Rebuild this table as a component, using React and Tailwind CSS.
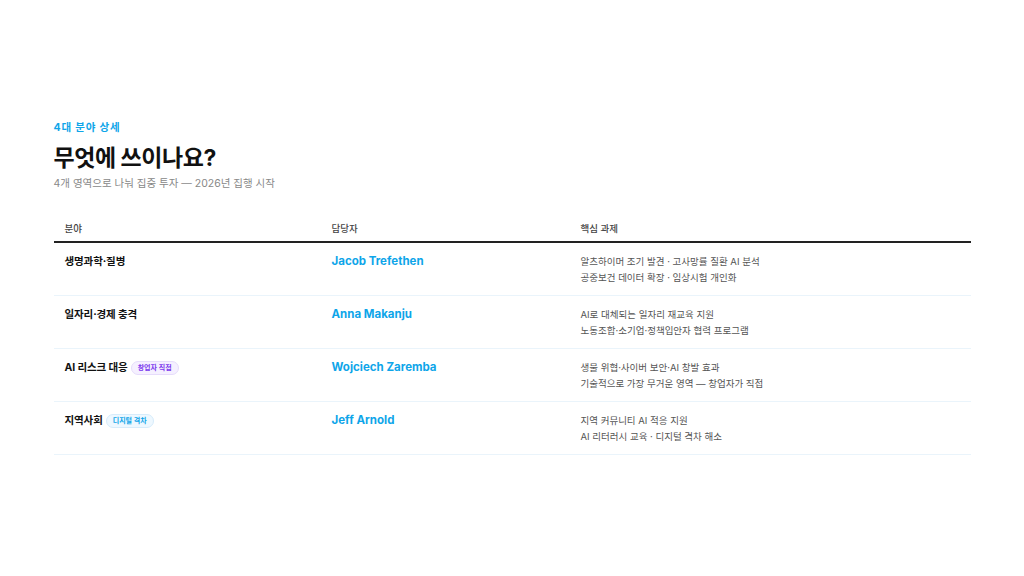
export default function App() {
  const rows = [
    {
      area: "생명과학·질병",
      name: "Jacob Trefethen",
      lines: ["알츠하이머 조기 발견 · 고사망률 질환 AI 분석", "공중보건 데이터 확장 · 임상시험 개인화"],
    },
    {
      area: "일자리·경제 충격",
      name: "Anna Makanju",
      lines: ["AI로 대체되는 일자리 재교육 지원", "노동조합·소기업·정책입안자 협력 프로그램"],
    },
    {
      area: "AI 리스크 대응",
      badge: "purple",
      badgeText: "창업자 직접",
      name: "Wojciech Zaremba",
      lines: ["생물 위협·사이버 보안·AI 창발 효과", "기술적으로 가장 무거운 영역 — 창업자가 직접"],
    },
    {
      area: "지역사회",
      badge: "blue",
      badgeText: "디지털 격차",
      name: "Jeff Arnold",
      lines: ["지역 커뮤니티 AI 적응 지원", "AI 리터러시 교육 · 디지털 격차 해소"],
    },
  ];
  return (
    <div
      className="w-full h-screen bg-white flex flex-col justify-center"
      style={{ fontFamily: 'Inter, "Noto Sans CJK KR", sans-serif' }}
    >
      <div className="w-[917px] mx-auto">
        <div className="text-[10.5px] font-bold text-[#0ea5e9] tracking-[0.08em] leading-[14px]">4대 분야 상세</div>
        <h1 className="mt-[9px] text-[23px] font-bold text-[#111] leading-[28px] tracking-[-0.02em]">무엇에 쓰이나요?</h1>
        <div className="mt-[5px] text-[10.5px] text-[#888] leading-[14px]">4개 영역으로 나눠 집중 투자 — 2026년 집행 시작</div>
        <div className="mt-[26px] w-full">
          <div className="grid grid-cols-[267px_249px_1fr] border-b-2 border-[#222] text-[9.5px] font-medium text-[#444] leading-[14px]">
            <div className="px-[11px] pt-[5px] pb-[5px]">분야</div>
            <div className="px-[11px] pt-[5px] pb-[5px]">담당자</div>
            <div className="px-[11px] pt-[5px] pb-[5px]">핵심 과제</div>
          </div>
          {rows.map((r) => (
            <div key={r.name} className="grid grid-cols-[267px_249px_1fr] border-b border-[#eaf4fb] items-start">
              <div className="px-[11px] pt-[11px] pb-[9px]">
                <div className="flex items-center gap-[3px] h-[16px]">
                  <span className="text-[10.5px] font-bold text-[#111] tracking-[-0.01em]">{r.area}</span>
                  {r.badge === "purple" && (
                    <span className="rounded-full border border-[#e6dcfb] bg-[#f5f0ff] text-[#7c3aed] text-[7px] font-semibold px-[6px] leading-[12px]">
                      {r.badgeText}
                    </span>
                  )}
                  {r.badge === "blue" && (
                    <span className="rounded-full border border-[#d6ecfb] bg-[#eef8ff] text-[#0ea5e9] text-[7px] font-semibold px-[6px] leading-[12px]">
                      {r.badgeText}
                    </span>
                  )}
                </div>
              </div>
              <div className="px-[11px] pt-[11px] pb-[9px]">
                <div className="h-[16px] flex items-center text-[11.5px] font-bold text-[#0ea5e9]">{r.name}</div>
              </div>
              <div className="px-[11px] pt-[11px] pb-[9px]">
                {r.lines.map((l) => (
                  <div key={l} className="text-[9.5px] text-[#555] leading-[16px]">{l}</div>
                ))}
              </div>
            </div>
          ))}
        </div>
      </div>
    </div>
  );
}
